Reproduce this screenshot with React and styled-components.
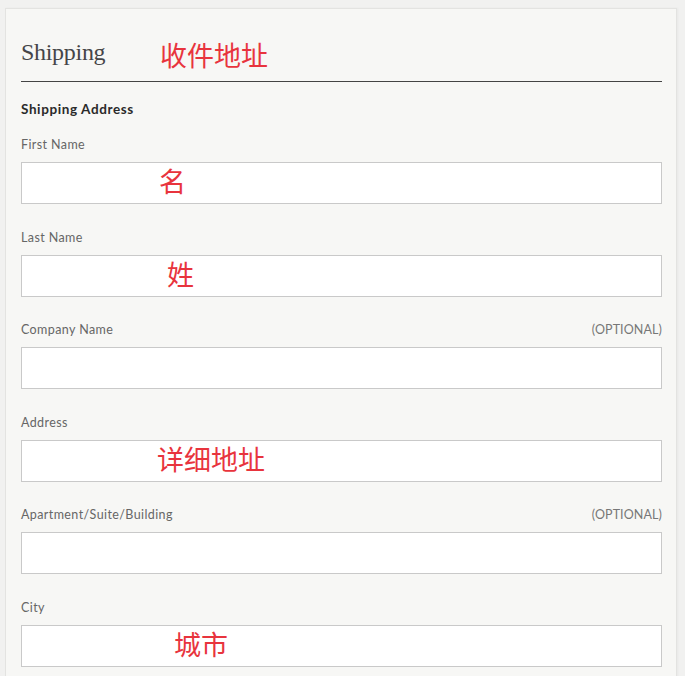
import React from 'react';
import styled, { createGlobalStyle } from 'styled-components';

const GlobalStyle = createGlobalStyle`
  body {
    margin: 0;
    background: #f1f1f0;
    font-family: Lato, "Noto Sans", sans-serif;
  }
`;

const red = '#e8343d';
const cjk = '"Noto Sans CJK SC", "Noto Sans", sans-serif';

const Panel = styled.section`
  width: 672px;
  box-sizing: border-box;
  margin: 8px 0 0 5px;
  padding: 0 14px 40px 15px;
  background: #f7f7f5;
  border: 1px solid #e3e3e1;
  box-shadow: 1px 0 2px rgba(0, 0, 0, 0.04);
`;

const Header = styled.header`
  display: flex;
  align-items: center;
  padding: 28px 0 14px;
  border-bottom: 1px solid #444;
`;

const Title = styled.h2`
  margin: 0;
  width: 139px;
  font-family: "Liberation Serif", "DejaVu Serif", serif;
  font-weight: 400;
  font-size: 24px;
  line-height: 30px;
  color: #454548;
  letter-spacing: -0.3px;
`;

const Note = styled.span`
  font-family: ${cjk};
  font-size: 27px;
  line-height: 30px;
  color: ${red};
  margin-left: ${(p) => p.offset || 0}px;
  transform: translateY(${(p) => p.shift || 0}px);
`;

const SectionTitle = styled.h3`
  margin: 18px 0 18px;
  font-size: 13.5px;
  line-height: 18px;
  font-weight: 700;
  letter-spacing: 0.6px;
  color: #2a2a2a;
`;

const Field = styled.div`
  margin-bottom: 24.5px;
`;

const LabelRow = styled.div`
  display: flex;
  justify-content: space-between;
  font-size: 12.5px;
  line-height: 18px;
  letter-spacing: 0.4px;
  color: #666;
  margin-bottom: 8px;
`;

const Optional = styled.span`
  color: #777;
  letter-spacing: 0.1px;
`;

const InputBox = styled.div`
  height: 42px;
  box-sizing: border-box;
  display: flex;
  align-items: center;
  padding-bottom: 4px;
  background: #fff;
  border: 1px solid #c9c9c9;
`;

const fields = [
  { label: 'First Name', note: '名', offset: 137 },
  { label: 'Last Name', note: '姓', offset: 145 },
  { label: 'Company Name', optional: true },
  { label: 'Address', note: '详细地址', offset: 135 },
  { label: 'Apartment/Suite/Building', optional: true },
  { label: 'City', note: '城市', offset: 152 },
];

export default function App() {
  return (
    <>
      <GlobalStyle />
      <Panel>
        <Header>
          <Title>Shipping</Title>
          <Note shift={3}>收件地址</Note>
        </Header>
        <SectionTitle>Shipping Address</SectionTitle>
        {fields.map((f) => (
          <Field key={f.label}>
            <LabelRow>
              <span>{f.label}</span>
              {f.optional && <Optional>(OPTIONAL)</Optional>}
            </LabelRow>
            <InputBox>
              {f.note && <Note offset={f.offset}>{f.note}</Note>}
            </InputBox>
          </Field>
        ))}
      </Panel>
    </>
  );
}
